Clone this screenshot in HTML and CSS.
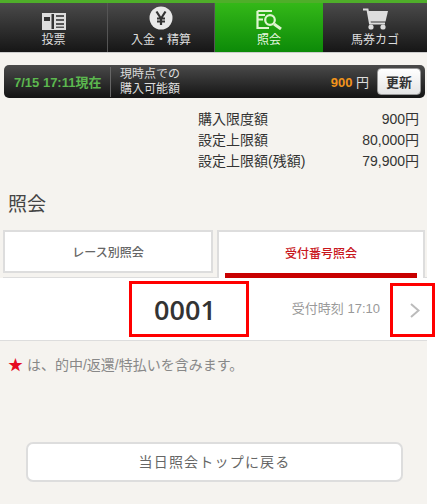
FILE: index.html
```html
<!DOCTYPE html>
<html lang="ja">
<head>
<meta charset="utf-8">
<title>照会</title>
<link rel="stylesheet" href="styles.css">
</head>
<body>
<div class="page">
  <nav class="nav">
    <a class="nav-item">
      <svg class="nav-icon" width="24" height="17" viewBox="0 0 24 17"><rect width="24" height="17" fill="#ddd"/><rect x="2" y="4" width="6" height="4" fill="#333"/><rect x="9.5" y="1" width="2.5" height="15" fill="#333"/><rect x="14" y="2" width="8" height="2" fill="#555"/><rect x="14" y="6" width="8" height="2" fill="#555"/><rect x="14" y="10" width="8" height="2" fill="#555"/><rect x="14" y="13.5" width="8" height="1.5" fill="#555"/></svg>
      <span>投票</span>
    </a>
    <a class="nav-item">
      <svg class="nav-icon" width="24" height="24" viewBox="0 0 24 24"><circle cx="12" cy="12" r="11.5" fill="#e8e8e8"/><path d="M7.5 5.5L12 12.5L16.5 5.5M12 12.5V19M8 12.5H16M8 15.5H16" fill="none" stroke="#333" stroke-width="2.2"/></svg>
      <span>入金・精算</span>
    </a>
    <a class="nav-item active">
      <svg class="nav-icon" width="26" height="20" viewBox="0 0 26 20"><path d="M1.5 1V18H13M1.5 1H16M1.5 9.5H7M1.5 5H9" fill="none" stroke="#dff5d0" stroke-width="2.2"/><circle cx="14" cy="10" r="4.8" fill="none" stroke="#dff5d0" stroke-width="2.2"/><path d="M18 14L25 19" stroke="#dff5d0" stroke-width="3"/></svg>
      <span>照会</span>
    </a>
    <a class="nav-item">
      <svg class="nav-icon" width="25" height="22" viewBox="0 0 25 22"><path d="M0 1.5H4.5L7 15.5H22" fill="none" stroke="#ddd" stroke-width="2"/><path d="M5 3H25L22.5 13.5H7Z" fill="#ddd"/><circle cx="8" cy="19" r="2.6" fill="#ddd"/><circle cx="20" cy="19" r="2.6" fill="#ddd"/></svg>
      <span>馬券カゴ</span>
    </a>
  </nav>

  <div class="balance">
    <span class="stamp">7/15 17:11現在</span>
    <span class="label">現時点での<br>購入可能額</span>
    <span class="amount"><b>900</b> 円</span>
    <button class="refresh">更新</button>
  </div>

  <dl class="limits">
    <div class="limit"><dt>購入限度額</dt><dd>900円</dd></div>
    <div class="limit"><dt>設定上限額</dt><dd>80,000円</dd></div>
    <div class="limit"><dt>設定上限額(残額)</dt><dd>79,900円</dd></div>
  </dl>

  <h1 class="title">照会</h1>

  <div class="tabs">
    <a class="tab">レース別照会</a>
    <a class="tab current">受付番号照会</a>
  </div>

  <div class="row">
    <strong class="number">0001</strong>
    <span class="time">受付時刻 17:10</span>
    <span class="chevron-box">
      <svg width="10" height="15" viewBox="0 0 10 15"><path d="M1 1L8.5 7.5L1 14" fill="none" stroke="#bbb" stroke-width="2"/></svg>
    </span>
  </div>

  <p class="note"><span class="star">★</span> は、的中/返還/特払いを含みます。</p>

  <a class="back">当日照会トップに戻る</a>
</div>
</body>
</html>
```

FILE: styles.css
```css
* { box-sizing: border-box; }
html, body { margin: 0; padding: 0; background: #fff; }
body { font-family: "Liberation Sans", "Noto Sans CJK JP", sans-serif; color: #333; }
.page { width: 427px; height: 504px; background: #f5f3ef; }

.nav { display: grid; grid-template-columns: 108px 107px 108px 104px; height: 53px; background: #222; border-top: 3px solid #4fae2a; border-bottom: 1px solid #ccc; }
.nav-item { display: flex; flex-direction: column; align-items: center; justify-content: flex-end; padding-bottom: 4px; gap: 3px; height: 49px; font-size: 12px; line-height: 15px; color: #ddd; background: linear-gradient(#4a4a4a, #161616); border-right: 1px solid #555; }
.nav-item:nth-child(3), .nav-item:last-child { border-right: 0; }
.nav-item.active { background: linear-gradient(#34b818, #0c8a08); color: #e8f8e0; }
.nav-icon { display: block; }

.balance { display: flex; align-items: center; height: 33px; margin: 12px 2px 0 4px; padding: 0 4px 0 10px; border-radius: 5px; background: linear-gradient(#4a4a4a, #141414); color: #ddd; }
.stamp { width: 96px; flex: none; color: #5cb84f; font-size: 13px; font-weight: 700; white-space: nowrap; }
.label { padding-left: 9px; border-left: 1px solid #666; font-size: 12px; line-height: 15px; }
.amount { margin-left: auto; margin-right: 8px; font-size: 13px; }
.amount b { color: #f2941b; font-size: 13px; }
.refresh { width: 44px; height: 27px; padding: 0; border: 1px solid #999; border-radius: 4px; background: linear-gradient(#fff, #e4e4e4); color: #333; font: 700 13px "Liberation Sans", "Noto Sans CJK JP", sans-serif; }

.limits { margin: 11px 8px 0 198px; font-size: 14px; line-height: 21px; color: #333; }
.limit { display: flex; justify-content: space-between; }
.limit dt, .limit dd { margin: 0; }

.title { margin: 19px 0 0 8px; height: 27px; font-size: 19px; line-height: 27px; font-weight: 400; color: #444; }

.tabs { display: grid; grid-template-columns: 210px 208px; gap: 4px; margin: 12px 0 0 3px; height: 48px; border-bottom: 1px solid #ddd; }
.tab { display: flex; align-items: center; justify-content: center; height: 43px; background: #fff; border: 2px solid #ddd; font-size: 12px; font-weight: 500; color: #666; }
.tab.current { position: relative; height: 48px; padding-bottom: 5px; color: #c8161d; border-bottom: 0; }
.tab.current::after { content: ""; position: absolute; left: 6px; right: 6px; bottom: 0; height: 5px; background: #c80000; }

.row { position: relative; height: 63px; width: 427px; background: #fff; border-bottom: 1px solid #ddd; }
.number { position: absolute; left: 129px; top: 3px; width: 120px; height: 56px; padding-right: 8px; border: 3px solid #f00; display: flex; align-items: center; justify-content: center; font: 600 27px "Open Sans", sans-serif; color: #333; }
.time { position: absolute; right: 47px; top: 22px; font-size: 13px; line-height: 18px; color: #999; }
.chevron-box { position: absolute; left: 390px; top: 5px; width: 45px; height: 54px; padding-left: 5px; border: 3px solid #f00; display: flex; align-items: center; justify-content: center; }

.note { margin: 15px 0 0 8px; font-size: 14px; line-height: 18px; color: #888; }
.star { color: #e60b22; font-size: 15px; line-height: 18px; }

.back { display: flex; align-items: center; justify-content: center; margin: 68px 0 0 26px; padding-bottom: 2px; width: 377px; height: 40px; background: #fff; border: 2px solid #ddd; border-radius: 7px; font-size: 14px; color: #666; letter-spacing: 1.2px; }
```
